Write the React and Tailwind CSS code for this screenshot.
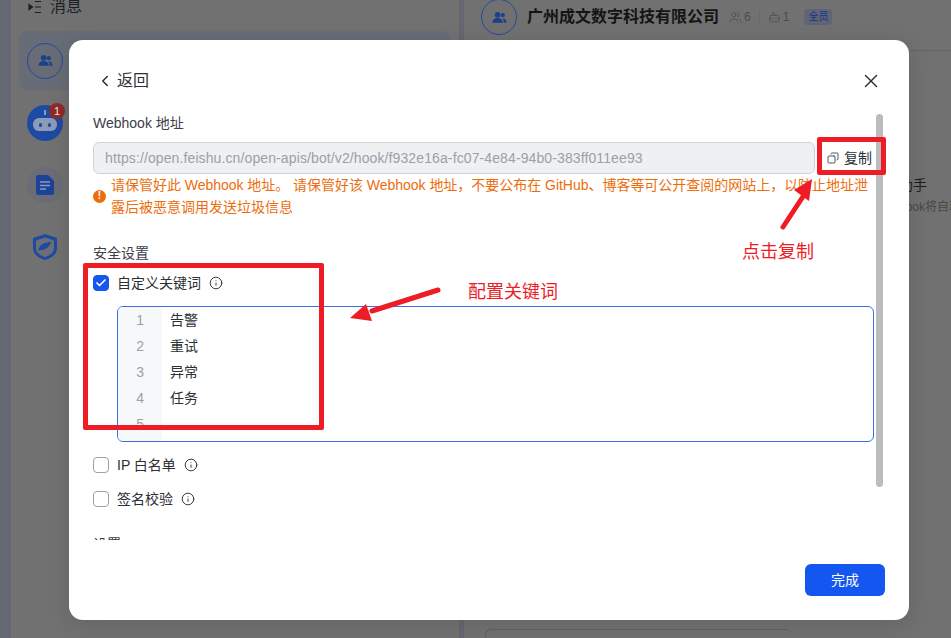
import React from "react"
import { ChevronLeft, X, Copy, Info, Check, Users, Bot } from "lucide-react"

const font = "font-['Liberation_Sans','Noto_Sans_CJK_SC',sans-serif]"

function GroupAvatar({ className }) {
  return (
    <div className={`flex h-9 w-9 items-center justify-center rounded-full border border-[#234a9e] ${className}`}>
      <svg width="15" height="15" viewBox="0 0 16 16" fill="#17408f">
        <circle cx="6" cy="5" r="3" />
        <circle cx="11.5" cy="5.5" r="2.2" />
        <path d="M0.5 13.5c0-3 2.4-5 5.5-5s5.5 2 5.5 5H0.5z" />
        <path d="M12.5 13.5h3c0-2.6-1.7-4.4-4.2-4.6 0.8 1.1 1.2 2.9 1.2 4.6z" />
      </svg>
    </div>
  )
}

function BackgroundApp() {
  return (
    <div className="flex h-[638px] w-[951px] overflow-hidden bg-[#717171]">
      <div className="w-[11px] shrink-0 bg-[#646872]" />
      <div className="flex w-[448px] shrink-0 flex-col">
        <div className="flex h-[31px] items-start gap-2 pl-[17px] text-[16px] leading-[14px] text-[#1d1f22]">
          <svg width="14" height="14" viewBox="0 0 14 14" fill="none" stroke="#1d1f22" strokeWidth="1.2">
            <path d="M1 4.500l3.500 2.500L1 9.500z" fill="#1d1f22" />
            <path d="M7 1.500h6M7 7h6M7 12.500h6" />
          </svg>
          <span>消息</span>
        </div>
        <div className="ml-2 flex h-[59px] w-[431px] items-center rounded-lg bg-[#676c76] pl-2">
          <GroupAvatar />
        </div>
        <div className="ml-[16px] mt-[15px] flex flex-col gap-[26px]">
          <div className="relative flex h-9 w-9 items-center justify-center rounded-full bg-[#1f4aa3]">
            <span className="absolute left-[17px] top-[5px] h-[5px] w-[2px] bg-[#8c9bb8]" />
            <div className="mt-[3px] flex h-[13px] w-[24px] items-center justify-center gap-[6px] rounded-md bg-[#8c9bb8]">
              <span className="h-[4px] w-[3px] rounded-full bg-[#1f4aa3]" />
              <span className="h-[4px] w-[3px] rounded-full bg-[#1f4aa3]" />
            </div>
            <span className="absolute -right-[2px] -top-[2px] flex h-4 w-4 items-center justify-center rounded-full bg-[#8f2a2a] text-[11px] text-[#e5e5e5]">1</span>
          </div>
          <div className="flex h-9 w-9 items-center justify-center rounded-full bg-[#6a6d75]">
            <svg width="18" height="20" viewBox="0 0 18 20">
              <path d="M2 0h10l6 6v12a2 2 0 0 1-2 2H2a2 2 0 0 1-2-2V2a2 2 0 0 1 2-2z" fill="#1c4299" />
              <path d="M4 7h10M4 10.500h10M4 14h6" stroke="#8c9bb8" strokeWidth="1.6" />
            </svg>
          </div>
          <div className="flex h-9 w-9 items-center justify-center">
            <svg width="26" height="28" viewBox="0 0 26 28">
              <path d="M13 1l12 4v10c0 6-5 10-12 12C6 25 1 21 1 15V5z" fill="#1f4aa3" />
              <path d="M13 4.500l9 3v7.500c0 4.500-4 7.500-9 9-5-1.500-9-4.500-9-9V7.500z" fill="#6c7076" />
              <path d="M6 17c4 1 11-1 13-8-6 0-11 2-13 8z" fill="#1f4aa3" />
            </svg>
          </div>
        </div>
      </div>
      <div className="w-[5px] shrink-0 bg-[#656872]" />
      <div className="flex min-w-0 flex-1 flex-col">
        <div className="flex h-[51px] items-start gap-[10px] border-b border-[#666666] pl-[17px]">
          <GroupAvatar className="-mt-px" />
          <span className="mt-[7px] text-[16px] font-bold leading-[20px] text-[#141414]">广州成文数字科技有限公司</span>
          <div className="mt-[9px] flex items-center text-[12px] leading-4 text-[#4c4c4c]">
            <Users className="h-[13px] w-[13px]" strokeWidth={1.4} />
            <span className="ml-[2px]">6</span>
            <span className="mx-2 h-3 w-px bg-[#686868]" />
            <Bot className="h-[13px] w-[13px]" strokeWidth={1.4} />
            <span className="ml-[2px]">1</span>
            <span className="ml-[15px] rounded bg-[#5f6574] px-1 text-[10px] leading-4 text-[#12358a]">全员</span>
          </div>
        </div>
        <div className="ml-[435px] mt-[123px] whitespace-nowrap leading-[22px]">
          <p className="text-[14px] text-[#1d1d1d]">助手</p>
          <p className="text-[12px] text-[#484848]">hook将自动</p>
        </div>
        <div className="ml-[21px] mt-auto h-[9px] w-[306px] rounded-t-md border-l border-t border-[#5f5f5f]" />
      </div>
    </div>
  )
}

function Check2({ checked, label, className }) {
  return (
    <div className={`flex items-center ${className}`}>
      <div className={`flex h-4 w-4 items-center justify-center rounded-[4px] border ${checked ? "border-[#1456f0] bg-[#1456f0]" : "border-[#9aa0a8] bg-white"}`}>
        {checked && <Check className="h-3 w-3 text-white" strokeWidth={3.5} />}
      </div>
      <span className="ml-2 text-[14px] leading-5 text-[#2b2f36]">{label}</span>
      <Info className="ml-2 h-[14px] w-[14px] text-[#2b2f36]" strokeWidth={1.6} />
    </div>
  )
}

function Editor() {
  const lines = ["告警", "重试", "异常", "任务", ""]
  return (
    <div className="ml-6 mt-[13px] flex h-[136px] w-[757px] overflow-hidden rounded-md border border-[#3b6fe6]">
      <div className="w-[44px] bg-[#f7f8fa]">
        {lines.map((_, i) => (
          <div key={i} className="h-[26px] pr-[18px] text-right text-[14px] leading-[26px] text-[#9aa0a8]">{i + 1}</div>
        ))}
      </div>
      <div className="flex-1 pl-2">
        {lines.map((line, i) => (
          <div key={i} className="h-[26px] text-[14px] leading-[26px] text-[#2b2f36]">{line}</div>
        ))}
      </div>
    </div>
  )
}

function Modal() {
  return (
    <div className="absolute left-[69px] top-[40px] h-[580px] w-[840px] overflow-hidden rounded-[14px] bg-white shadow-[0_4px_24px_rgba(0,0,0,0.12)]">
      <div className="flex h-[74px] items-start justify-between pl-[27px] pr-[27px] pt-[29px]">
        <div className="flex items-center text-[#2b2f36]">
          <ChevronLeft className="h-[18px] w-[18px]" strokeWidth={2} />
          <span className="ml-[3px] text-[16px] leading-[24px]">返回</span>
        </div>
        <X className="mt-[1px] h-[22px] w-[22px] text-[#2b2f36]" strokeWidth={1.5} />
      </div>

      <div className="relative h-[426px] overflow-hidden pl-6">
        <div className="text-[14px] leading-[18px] text-[#3c4047]">Webhook 地址</div>
        <div className="mt-[10px] flex items-center">
          <div className="flex h-[32px] w-[722px] items-center rounded-md border border-[#d0d3d6] bg-[#eff0f1] pl-[11px] text-[14px] tracking-[0.11px] text-[#9aa0a8]">
            https://open.feishu.cn/open-apis/bot/v2/hook/f932e16a-fc07-4e84-94b0-383ff011ee93
          </div>
          <div className="ml-[12px] flex items-center text-[14px] text-[#2b2f36]">
            <Copy className="h-3 w-3 -scale-x-100" strokeWidth={1.6} />
            <span className="ml-[5px]">复制</span>
          </div>
        </div>
        <div className="flex w-[775px] items-center">
          <div className="flex h-[13px] w-[13px] shrink-0 items-center justify-center rounded-full bg-[#ed6d0c] text-[10px] font-bold leading-none text-white">!</div>
          <p className="ml-[5px] flex-1 text-[14px] leading-[22px] text-[#ed6d0c]">
            <span className="block whitespace-nowrap tracking-[-0.03px] [text-align-last:justify]">请保管好此 Webhook 地址。 请保管好该 Webhook 地址，不要公布在 GitHub、博客等可公开查阅的网站上，以防止地址泄</span>
            <span className="block">露后被恶意调用发送垃圾信息</span>
          </p>
        </div>
        <div className="mt-[25px] text-[14px] leading-[20px] text-[#3c4047]">安全设置</div>
        <Check2 checked label="自定义关键词" className="mt-[10px]" />
        <Editor />
        <Check2 label="IP 白名单" className="mt-[13px]" />
        <Check2 label="签名校验" className="mt-[14px]" />
        <div className="mt-[25px] text-[14px] leading-[20px] text-[#3c4047]">设置</div>
        <div className="absolute right-[26px] top-0 h-[373px] w-[7px] rounded-full bg-[#bbbcbe]" />
      </div>

      <div className="flex justify-end pr-[24px] pt-[24px]">
        <button className="h-8 w-20 rounded-md bg-[#1456f0] text-[14px] text-white">完成</button>
      </div>
    </div>
  )
}

// red markup drawn on top of the screenshot
function Annotations() {
  return (
    <>
      <div className="absolute left-[817px] top-[137px] h-[38px] w-[69px] rounded-[2px] border-[5px] border-[#ee1c25]" />
      <div className="absolute left-[83px] top-[263px] h-[167px] w-[241px] rounded-[2px] border-[5px] border-[#ee1c25]" />
      <svg className="absolute left-0 top-0" width="951" height="638" fill="none">
        <path d="M783 227L804 195" stroke="#ee1c25" strokeWidth="5" strokeLinecap="round" />
        <path d="M812 179L809 201L794 190z" fill="#ee1c25" />
        <path d="M438 290L372 311" stroke="#ee1c25" strokeWidth="5" strokeLinecap="round" />
        <path d="M350 318L366 304L372 321z" fill="#ee1c25" />
      </svg>
      <span className="absolute left-[742px] top-[239px] text-[18px] leading-[26px] text-[#ee1c25]">点击复制</span>
      <span className="absolute left-[468px] top-[279px] text-[18px] leading-[26px] text-[#ee1c25]">配置关键词</span>
    </>
  )
}

export default function App() {
  return (
    <div className={`relative h-[638px] w-[951px] overflow-hidden ${font}`}>
      <BackgroundApp />
      <Modal />
      <Annotations />
    </div>
  )
}
